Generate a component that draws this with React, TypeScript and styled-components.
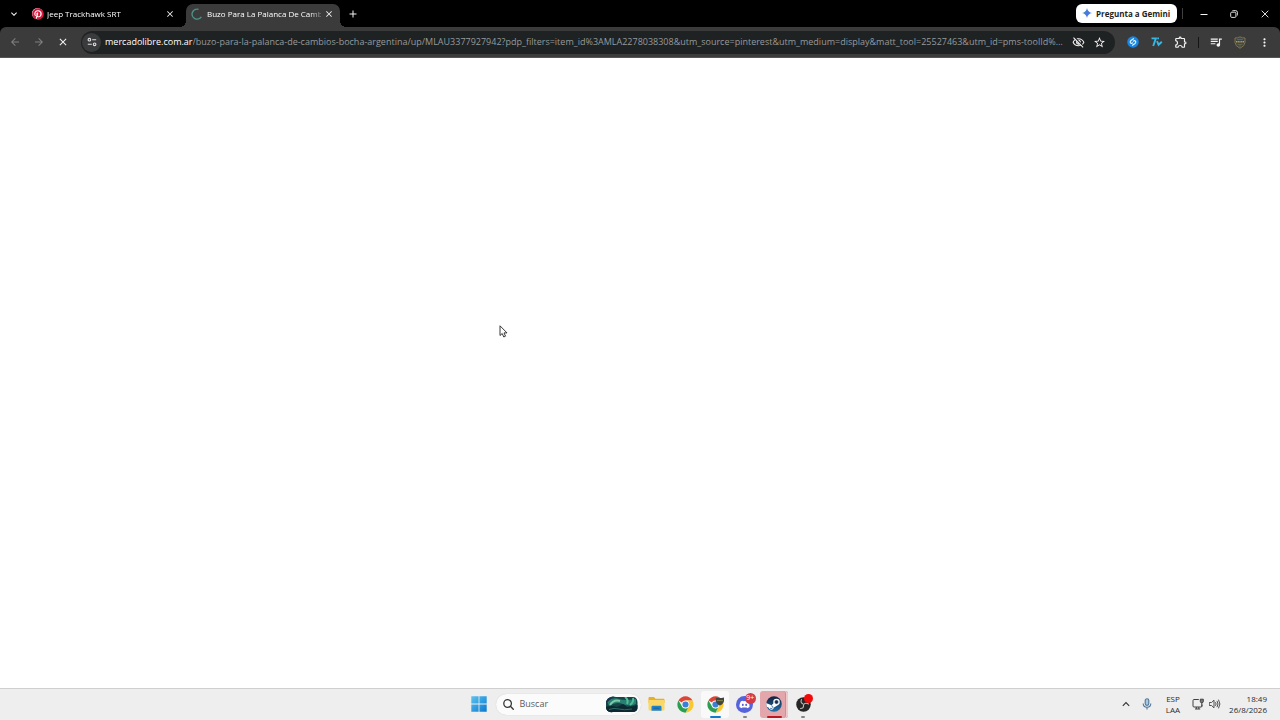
import React from "react";
import styled, { createGlobalStyle, css } from "styled-components";
import { FaPinterest, FaDiscord } from "react-icons/fa";
import {
  MdArrowBack,
  MdArrowForward,
  MdClose,
  MdAdd,
  MdKeyboardArrowDown,
  MdOutlineVisibilityOff,
  MdStarOutline,
  MdOutlineExtension,
  MdQueueMusic,
  MdMoreVert,
} from "react-icons/md";

const GlobalStyle = createGlobalStyle`
  *, *::before, *::after { box-sizing: border-box; }
  body {
    margin: 0;
    background: #ffffff;
    font-family: "Open Sans", "Noto Sans", sans-serif;
  }
  button, input { font: inherit; color: inherit; border: 0; padding: 0; background: none; }
  svg { display: block; flex: none; }
`;

const Screen = styled.div`
  display: flex;
  flex-direction: column;
  min-height: 100vh;
`;

const Chrome = styled.header`
  background: #000000;
  color: #ffffff;
`;

const TabStrip = styled.div`
  display: flex;
  align-items: flex-end;
  height: 27px;
`;

const IconButton = styled.button<{ $w?: number; $dim?: boolean }>`
  display: flex;
  flex: none;
  align-items: center;
  justify-content: center;
  width: ${(p) => p.$w ?? 24}px;
  height: 24px;
  color: ${(p) => (p.$dim ? "#808080" : "#f4f4f4")};
`;

const StripTools = styled.div`
  display: flex;
  align-items: center;
  height: 27px;
`;

const Tab = styled.div<{ $active?: boolean }>`
  position: relative;
  display: flex;
  align-items: center;
  width: 154px;
  height: 23px;
  padding: 0 3px 4px 5px;
  border-radius: 7px 7px 0 0;
  font-size: 8px;
  ${(p) =>
    p.$active &&
    css`
      background: #3b3b3b;
      &::before,
      &::after {
        content: "";
        position: absolute;
        bottom: 0;
        width: 6px;
        height: 6px;
      }
      &::before {
        left: -6px;
        background: radial-gradient(circle at 0 0, #000000 6px, #3b3b3b 6px);
      }
      &::after {
        right: -6px;
        background: radial-gradient(circle at 100% 0, #000000 6px, #3b3b3b 6px);
      }
    `}
`;

const TabTitle = styled.span`
  flex: 1;
  min-width: 0;
  margin-left: 4px;
  line-height: 14px;
  white-space: nowrap;
  color: #ffffff;
  mask-image: linear-gradient(to right, #000 90%, transparent 104%);
`;

const TabClose = styled(IconButton)`
  width: 16px;
  height: 16px;
`;

const WindowTools = styled.div`
  display: flex;
  align-items: center;
  height: 27px;
  margin-left: auto;
`;

const GeminiButton = styled.button`
  display: flex;
  align-items: center;
  gap: 4px;
  width: 101px;
  height: 19px;
  padding: 0 0 1px 6px;
  border-radius: 6px;
  background: #ffffff;
  color: #1f1f1f;
  font-size: 8px;
  font-weight: 700;
  white-space: nowrap;
`;

const Divider = styled.span<{ $color: string; $space: number }>`
  width: 1px;
  height: 11px;
  margin: 0 ${(p) => p.$space}px;
  background: ${(p) => p.$color};
`;

const Toolbar = styled.div`
  display: flex;
  align-items: center;
  height: 31px;
  padding: 0 4px 0 3px;
  border-radius: 6px 6px 0 0;
  border-bottom: 1px solid #555555;
  background: #3b3b3b;
`;

const AddressBar = styled.form`
  display: flex;
  flex: 1;
  align-items: center;
  min-width: 0;
  height: 23px;
  margin: 0 6px;
  padding: 0 5px 0 1px;
  border-radius: 12px;
  background: #1f2223;
  font-size: 9px;
  line-height: 16px;
`;

const SiteInfo = styled(IconButton)`
  width: 19px;
  height: 19px;
  margin-right: 4px;
  border-radius: 50%;
  background: #3a3b3c;
`;

const Domain = styled.label`
  flex: none;
  color: #ffffff;
`;

const UrlPath = styled.input`
  flex: 1;
  min-width: 0;
  height: 16px;
  color: #959a9c;
  text-overflow: ellipsis;
  outline: 0;
`;

const Page = styled.main`
  position: relative;
  flex: 1;
  background: #ffffff;
`;

const Pointer = styled.svg`
  position: absolute;
  left: 499px;
  top: 267px;
`;

const Taskbar = styled.footer`
  display: grid;
  grid-template-columns: 1fr auto 1fr;
  align-items: center;
  height: 32px;
  padding-bottom: 1px;
  border-top: 1px solid #cfcfcf;
  background: #eeeeee;
  color: #2b2b2b;
`;

const Dock = styled.nav`
  grid-column: 2;
  display: flex;
  align-items: center;
  padding-left: 2px;
`;

const StartButton = styled(IconButton)`
  width: 28px;
  margin-right: 3px;
`;

const Search = styled.label`
  display: flex;
  align-items: center;
  width: 145px;
  height: 21px;
  padding: 0 3px 0 7px;
  border-radius: 11px;
  background: #fbfbfb;
  box-shadow: 0 0 1px #c4c4c4;
`;

const SearchInput = styled.input`
  flex: 1;
  min-width: 0;
  margin-left: 6px;
  font-size: 9px;
  line-height: 14px;
  outline: 0;
  &::placeholder {
    color: #5c5c5c;
    opacity: 1;
  }
`;

const Apps = styled.div`
  display: flex;
  justify-content: space-between;
  width: 175px;
  margin-left: 2px;
`;

const AppButton = styled.button<{ $tone?: "focus" | "alert" }>`
  position: relative;
  display: flex;
  align-items: center;
  justify-content: center;
  width: 28px;
  height: 27px;
  border-radius: 3px;
  ${(p) => p.$tone === "focus" && "background: #f9f9f9;"}
  ${(p) =>
    p.$tone === "alert" &&
    "background: #e3a6aa; box-shadow: inset -2px 0 0 #eec9cb, inset -3px 0 0 #cf8f94;"}
`;

const Disc = styled.span<{ $size: number; $color: string }>`
  display: flex;
  align-items: center;
  justify-content: center;
  width: ${(p) => p.$size}px;
  height: ${(p) => p.$size}px;
  border-radius: 50%;
  background: ${(p) => p.$color};
`;

const Indicator = styled.span<{ $w: number; $color: string }>`
  position: absolute;
  bottom: 0;
  left: 0;
  right: 0;
  width: ${(p) => p.$w}px;
  height: 2px;
  margin: 0 auto;
  border-radius: 1px;
  background: ${(p) => p.$color};
`;

const Badge = styled.span<{ $count?: boolean }>`
  position: absolute;
  top: ${(p) => (p.$count ? 2 : 3)}px;
  right: ${(p) => (p.$count ? 3 : 4)}px;
  width: ${(p) => (p.$count ? 11 : 9)}px;
  height: ${(p) => (p.$count ? 11 : 9)}px;
  border-radius: 50%;
  background: ${(p) => (p.$count ? "#d33b46" : "#f00a0a")};
  color: #ffffff;
  font-size: 7px;
  line-height: 10px;
  text-align: center;
`;

const Tray = styled.div`
  grid-column: 3;
  display: flex;
  align-items: center;
  justify-content: flex-end;
  padding-right: 13px;
`;

const TrayButton = styled.button<{ $w: number }>`
  display: flex;
  align-items: center;
  justify-content: center;
  width: ${(p) => p.$w}px;
  height: 24px;
  font-size: 8px;
  line-height: 11px;
`;

const Clock = styled.time`
  width: 46px;
  font-size: 8px;
  line-height: 11px;
  text-align: right;
  white-space: nowrap;
`;

const Spinner = () => (
  <svg width="12" height="12" viewBox="0 0 12 12" fill="none">
    <path d="M7.5 1.3A5 5 0 1 0 10.3 8.8" stroke="#4d9388" strokeWidth="1.4" />
  </svg>
);

const GeminiSpark = () => (
  <svg width="10" height="10" viewBox="0 0 10 10">
    <defs>
      <linearGradient id="spark" x1="0" y1="0.3" x2="1" y2="0.7">
        <stop offset="0" stopColor="#43a778" />
        <stop offset="0.4" stopColor="#4b79de" />
        <stop offset="1" stopColor="#3c78ee" />
      </linearGradient>
    </defs>
    <path d="M5 0Q5.8 4.2 10 5Q5.8 5.8 5 10Q4.2 5.8 0 5Q4.2 4.2 5 0Z" fill="url(#spark)" />
  </svg>
);

const Minimize = () => (
  <svg width="8" height="8" viewBox="0 0 8 8" stroke="currentColor"><path d="M0.5 4.5H7.5" /></svg>
);

const Restore = () => (
  <svg width="8" height="8" viewBox="0 0 8 8" fill="none" stroke="currentColor" strokeWidth="0.9">
    <rect x="0.7" y="2.2" width="5.2" height="5.2" rx="1" />
    <path d="M2.2 1.1Q2.5 0.6 3.2 0.6H5.6Q7.4 0.6 7.4 2.4V4.8Q7.4 5.5 6.8 5.8" />
  </svg>
);

const CloseWindow = () => (
  <svg width="8" height="8" viewBox="0 0 8 8" stroke="currentColor" strokeWidth="0.9"><path d="M0.7 0.7L7.3 7.3M7.3 0.7L0.7 7.3" /></svg>
);

const Tune = () => (
  <svg width="10" height="10" viewBox="0 0 10 10" fill="none" stroke="#dedede" strokeWidth="1.1">
    <circle cx="2.4" cy="2.7" r="1.3" />
    <path d="M5.2 2.7H9.2M0.8 7.3H4.8" />
    <circle cx="7.6" cy="7.3" r="1.3" />
  </svg>
);

const Shazam = () => (
  <svg width="12" height="12" viewBox="0 0 12 12" fill="none">
    <circle cx="6" cy="6" r="5.8" fill="#1886e2" />
    <g stroke="#e8f5ff" strokeWidth="1.1" strokeLinecap="round">
      <path d="M6.5 2.7L4 4.5Q2.4 6 4 7.2Q4.7 7.6 5.6 6.9" />
      <path d="M5.5 9.3L8 7.5Q9.6 6 8 4.8Q7.3 4.4 6.4 5.1" />
    </g>
  </svg>
);

const SevenTv = () => (
  <svg width="12" height="10" viewBox="0 0 12 10" fill="none" stroke="#35b8e6" strokeWidth="1.9">
    <path d="M0.5 1.4H4.9L2.2 9" />
    <path d="M6 4.200L7.600 7.800L10.800 4.800" />
    <path d="M6.300 1.400H8" />
  </svg>
);

const Shield = () => (
  <svg width="12" height="13" viewBox="0 0 12 13">
    <path d="M1 2Q3.5 2.2 6 0.8Q8.5 2.2 11 2V6.5Q10.8 10 6 12.3Q1.2 10 1 6.5Z" fill="#3e4545" stroke="#80734e" strokeWidth="1" />
    <path d="M2 5.8H10" stroke="#b59b52" strokeWidth="1.5" strokeDasharray="1.2 0.5" />
    <path d="M3.2 3.4H8.8M3.5 8.3H8.5M5 10H7" stroke="#72704f" strokeWidth="0.8" />
  </svg>
);

const WindowsLogo = () => (
  <svg width="16" height="16" viewBox="0 0 16 16">
    <defs>
      <linearGradient id="win" x1="0" y1="0" x2="16" y2="16" gradientUnits="userSpaceOnUse">
        <stop offset="0" stopColor="#5cc5ef" />
        <stop offset="1" stopColor="#0876cf" />
      </linearGradient>
    </defs>
    <path d="M0.3 0.3H7.6V7.6H0.3ZM8.4 0.3H15.7V7.6H8.4ZM0.3 8.4H7.6V15.7H0.3ZM8.4 8.4H15.7V15.7H8.4Z" fill="url(#win)" />
  </svg>
);

const Magnifier = () => (
  <svg width="11" height="11" viewBox="0 0 11 11" fill="none" stroke="#353535" strokeWidth="1.3">
    <circle cx="4.6" cy="4.5" r="3.8" />
    <path d="M7.4 7.3L10.3 10.3" strokeLinecap="round" />
  </svg>
);

const Aurora = () => (
  <svg width="33" height="17" viewBox="0 0 33 17">
    <defs>
      <clipPath id="pill"><path d="M6 1Q8 0 11 1H27Q32 0.5 32.5 6V11Q33 16 27 16H8Q1 17 1 11V6Q2 2 6 1Z" /></clipPath>
      <filter id="glow" x="-20%" y="-20%" width="140%" height="140%"><feGaussianBlur stdDeviation="0.7" /></filter>
    </defs>
    <g clipPath="url(#pill)">
      <rect width="33" height="17" fill="#154449" />
      <g filter="url(#glow)">
        <path d="M2 5Q8 1 14 3T31 3V8Q25 11 18 8T4 10Z" fill="#2a8070" />
        <path d="M5 9Q9 3 15 5" stroke="#7ccba6" strokeWidth="2" fill="none" />
        <path d="M20 1Q24 4 22 8M28 2Q29 6 25 9" stroke="#4fbd96" strokeWidth="2" fill="none" />
        <path d="M0 0H9L5 4L0 8Z" fill="#1b3550" />
      </g>
      <path d="M0 11Q7 9 12 11L18 8L22 11Q28 11 33 9V17H0Z" fill="#0d2830" />
      <path d="M4 13.5Q9 11.500 14 13T27 13" stroke="#2b6b62" strokeWidth="1" fill="none" />
    </g>
  </svg>
);

const Folder = () => (
  <svg width="17" height="16" viewBox="0 0 17 16">
    <path d="M0.5 2Q0.5 1 1.5 1H6L7.5 2.8H15.5Q16.5 2.8 16.5 3.8V7H0.5Z" fill="#e5ae2c" />
    <rect x="0.5" y="4" width="16" height="10.5" rx="1" fill="#fad865" />
    <path d="M3.5 14.8V11Q3.5 9.8 4.7 9.8H12.3Q13.5 9.8 13.5 11V14.8Z" fill="#2382c5" />
    <path d="M5.5 12.2H11.5" stroke="#16609e" strokeWidth="1" />
  </svg>
);

const ChromeLogo = ({ profile }: { profile?: boolean }) => (
  <svg width="17" height="17" viewBox="0 0 48 48">
    <path d="M24 24L4.1 12.5A23 23 0 0 1 43.9 12.5L24 13Z" fill="#dc4437" />
    <path d="M24 13H43.9A23 23 0 0 1 24 47L33.5 29.5Z" fill="#fac72d" />
    <path d="M14.5 29.5L4.1 12.5A23 23 0 0 0 24 47L33.5 29.5L24 35Z" fill="#2b9e50" />
    <circle cx="24" cy="24" r="11" fill="#f5f7f8" />
    <circle cx="24" cy="24" r="8.6" fill="#3b7fd9" />
    {profile && (
      <g>
        <path d="M25 5Q36 7 48 4V14Q47 22 36.5 27Q26 22 25 14Z" fill="#3f463e" />
        <path d="M28 13H45" stroke="#8a8050" strokeWidth="3" />
      </g>
    )}
  </svg>
);

const SteamLogo = () => (
  <svg width="16" height="16" viewBox="0 0 32 32" fill="none">
    <defs>
      <linearGradient id="steam" x1="0" y1="0" x2="0" y2="1">
        <stop offset="0" stopColor="#101f3a" />
        <stop offset="1" stopColor="#2173ad" />
      </linearGradient>
      <clipPath id="steamDisc"><circle cx="16" cy="16" r="15.5" /></clipPath>
    </defs>
    <g clipPath="url(#steamDisc)">
      <rect width="32" height="32" fill="url(#steam)" />
      <path d="M0 14L11 18.500L17 13L24 18L16 23Q14 29 9 27Q6 26 5 23L0 21Z" fill="#ffffff" />
      <circle cx="21" cy="12" r="6.500" fill="#ffffff" />
      <circle cx="21" cy="12" r="3.800" fill="#15294a" stroke="#9eb1c6" strokeWidth="1" />
      <path d="M8 24.500Q12.500 27 14 22.500Q13.500 19.500 10.500 19.800" stroke="#1f5b90" strokeWidth="1.500" />
    </g>
  </svg>
);

const ObsLogo = () => (
  <svg width="15" height="15" viewBox="0 0 30 30" fill="none">
    <circle cx="15" cy="15" r="14.5" fill="#262626" />
    <g stroke="#b9b9b9" strokeWidth="2.2" strokeLinecap="round">
      <path d="M11 5Q8 11 14 14" />
      <path d="M25 14Q19 10.5 15.5 15" />
      <path d="M9 23Q16 23 15 16" />
    </g>
  </svg>
);

const Mic = () => (
  <svg width="10" height="12" viewBox="0 0 10 12" fill="none" stroke="#4f7698" strokeWidth="1.1">
    <rect x="3.2" y="0.8" width="3.6" height="6.6" rx="1.8" fill="#a9c8df" />
    <path d="M1.2 5.5Q1.2 9.2 5 9.2T8.8 5.5M5 9.2V11.6" />
  </svg>
);

const Network = () => (
  <svg width="12" height="12" viewBox="0 0 12 12" fill="none" stroke="#404040" strokeWidth="1">
    <path d="M6.8 1.5H2Q1 1.5 1 2.5V8Q1 9 2 9H9Q10 9 10 8V6.5M4.3 9V11M6.8 9V11M3 11H8.2" />
    <path d="M8.3 1.2H11.3V3.5Q11.3 4.8 9.8 4.8T8.3 3.5ZM9.8 4.8V8.5" fill="#777777" />
  </svg>
);

const Sound = () => (
  <svg width="12" height="12" viewBox="0 0 12 12" fill="none" stroke="#404040" strokeWidth="0.9" strokeLinejoin="round" strokeLinecap="round">
    <path d="M0.7 4.5H2.5L5 2.2V9.8L2.5 7.5H0.7Z" />
    <path d="M6.7 4.5Q7.7 6 6.7 7.5M8.2 3.2Q10 6 8.2 8.8M9.7 2Q12.3 6 9.7 10" />
  </svg>
);

export default function App() {
  return (
    <Screen>
      <GlobalStyle />
      <Chrome>
        <TabStrip>
          <StripTools>
            <IconButton $w={27} aria-label="Buscar pestañas"><MdKeyboardArrowDown size={12} /></IconButton>
          </StripTools>
          <Tab>
            <Disc $size={11} $color="#ffffff"><FaPinterest size={12} color="#d8173c" /></Disc>
            <TabTitle>Jeep Trackhawk SRT</TabTitle>
            <TabClose aria-label="Cerrar pestaña"><MdClose size={10} /></TabClose>
          </Tab>
          <StripTools><Divider $color="transparent" $space={2} /></StripTools>
          <Tab $active>
            <Spinner />
            <TabTitle>Buzo Para La Palanca De Camb</TabTitle>
            <TabClose aria-label="Cerrar pestaña"><MdClose size={10} /></TabClose>
          </Tab>
          <StripTools>
            <IconButton $w={26} aria-label="Nueva pestaña"><MdAdd size={12} /></IconButton>
          </StripTools>
          <WindowTools>
            <GeminiButton><GeminiSpark />Pregunta a Gemini</GeminiButton>
            <Divider $color="#3f3f3f" $space={5} />
            <IconButton $w={31} aria-label="Minimizar"><Minimize /></IconButton>
            <IconButton $w={30} aria-label="Restaurar"><Restore /></IconButton>
            <IconButton $w={31} aria-label="Cerrar"><CloseWindow /></IconButton>
          </WindowTools>
        </TabStrip>
        <Toolbar>
          <IconButton $dim aria-label="Atrás"><MdArrowBack size={12} /></IconButton>
          <IconButton $dim aria-label="Adelante"><MdArrowForward size={12} /></IconButton>
          <IconButton aria-label="Detener"><MdClose size={12} /></IconButton>
          <AddressBar onSubmit={(e) => e.preventDefault()}>
            <SiteInfo type="button" aria-label="Información del sitio"><Tune /></SiteInfo>
            <Domain htmlFor="url">mercadolibre.com.ar</Domain>
            <UrlPath
              id="url"
              defaultValue="/buzo-para-la-palanca-de-cambios-bocha-argentina/up/MLAU3377927942?pdp_filters=item_id%3AMLA2278038308&utm_source=pinterest&utm_medium=display&matt_tool=25527463&utm_id=pms-toolId%…"
            />
            <IconButton $w={21} type="button" aria-label="Cookies bloqueadas"><MdOutlineVisibilityOff size={13} /></IconButton>
            <IconButton $w={21} type="button" aria-label="Favoritos"><MdStarOutline size={13} /></IconButton>
          </AddressBar>
          <IconButton aria-label="Shazam"><Shazam /></IconButton>
          <IconButton aria-label="7TV"><SevenTv /></IconButton>
          <IconButton aria-label="Extensiones"><MdOutlineExtension size={14} /></IconButton>
          <Divider $color="#151515" $space={5} />
          <IconButton aria-label="Controles multimedia"><MdQueueMusic size={14} /></IconButton>
          <IconButton aria-label="Perfil"><Shield /></IconButton>
          <IconButton aria-label="Menú"><MdMoreVert size={13} /></IconButton>
        </Toolbar>
      </Chrome>
      <Page>
        <Pointer width="9" height="13" viewBox="0 0 9 13">
          <path d="M1 0.8V10.5L3.2 8.5L4.8 12L6.5 11.2L5 7.9H8Z" fill="#ffffff" stroke="#222222" strokeWidth="0.9" />
        </Pointer>
      </Page>
      <Taskbar>
        <Dock>
          <StartButton aria-label="Inicio"><WindowsLogo /></StartButton>
          <Search>
            <Magnifier />
            <SearchInput placeholder="Buscar" aria-label="Buscar" />
            <Aurora />
          </Search>
          <Apps>
            <AppButton aria-label="Explorador"><Folder /></AppButton>
            <AppButton aria-label="Chrome"><ChromeLogo /></AppButton>
            <AppButton $tone="focus" aria-label="Chrome, perfil">
              <ChromeLogo profile />
              <Indicator $w={11} $color="#1579cb" />
            </AppButton>
            <AppButton aria-label="Discord">
              <Disc $size={17} $color="#5563dc"><FaDiscord size={11} color="#ffffff" /></Disc>
              <Badge $count>9+</Badge>
              <Indicator $w={4} $color="#868686" />
            </AppButton>
            <AppButton $tone="alert" aria-label="Steam">
              <SteamLogo />
              <Indicator $w={15} $color="#bd1621" />
            </AppButton>
            <AppButton aria-label="OBS">
              <ObsLogo />
              <Badge />
              <Indicator $w={4} $color="#868686" />
            </AppButton>
          </Apps>
        </Dock>
        <Tray>
          <TrayButton $w={20} aria-label="Iconos ocultos">
            <svg width="8" height="6" viewBox="0 0 8 6" fill="none" stroke="#333333" strokeWidth="1.1"><path d="M0.8 4.8L4 1.6L7.2 4.8" /></svg>
          </TrayButton>
          <TrayButton $w={22} aria-label="Micrófono"><Mic /></TrayButton>
          <TrayButton $w={30}>ESP<br />LAA</TrayButton>
          <TrayButton $w={20} aria-label="Red"><Network /></TrayButton>
          <TrayButton $w={13} aria-label="Volumen"><Sound /></TrayButton>
          <Clock>18:49<br />26/8/2026</Clock>
        </Tray>
      </Taskbar>
    </Screen>
  );
}
